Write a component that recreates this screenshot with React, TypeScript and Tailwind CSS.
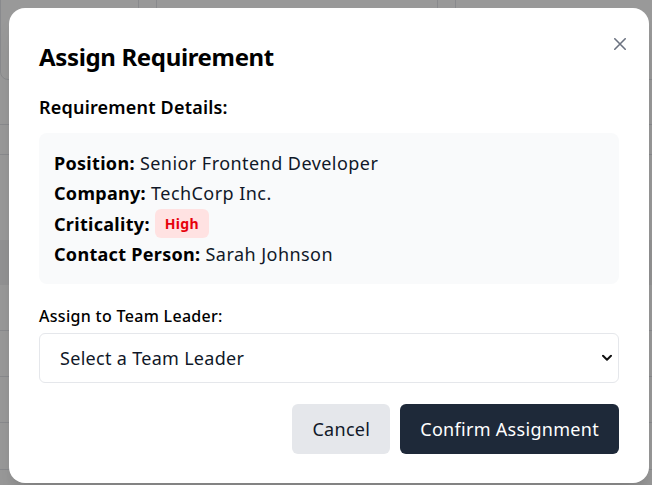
import { useState } from "react";

const teamLeaders = ["Michael Chen", "Priya Patel", "David Kim", "Emily Rodriguez"];

function BackgroundPage() {
  return (
    <div className="h-[485px] overflow-hidden bg-white">
      {/* stat cards peeking above the overlay */}
      <div className="-mt-10 flex gap-[17px]">
        <div className="h-[120px] w-[139px] shrink-0 rounded-lg border border-gray-200 bg-white" />
        <div className="h-[120px] w-[282px] shrink-0 rounded-lg border border-gray-200 bg-white" />
        <div className="h-[120px] w-[282px] shrink-0 rounded-lg border border-gray-200 bg-white" />
      </div>
      {/* table behind */}
      <div className="mt-[5px] flex flex-col">
        <div className="h-[40px] border-b border-gray-200" />
        <div className="h-[30px] border-b border-gray-200" />
        <div className="h-[85px]" />
        <div className="h-[45px] bg-gray-100" />
        <div className="h-[46px] border-b border-gray-200" />
        <div className="h-[46px] border-b border-gray-200" />
        <div className="h-[46px] border-b border-gray-200" />
        <div className="h-[47px] border-b border-gray-200" />
      </div>
    </div>
  );
}

function CloseIcon() {
  return (
    <svg width="12" height="12" viewBox="0 0 12 12" fill="none">
      <path d="M0.8 0.8L11.2 11.2M11.2 0.8L0.8 11.2" stroke="#6b7280" strokeWidth="1.6" strokeLinecap="round" />
    </svg>
  );
}

function Chevron() {
  return (
    <svg width="10" height="7" viewBox="0 0 10 7" fill="none">
      <path d="M1 1.2L5 5.2L9 1.2" stroke="#111" strokeWidth="2" strokeLinecap="round" strokeLinejoin="round" />
    </svg>
  );
}

export default function App() {
  const [leader, setLeader] = useState("");

  return (
    <div className="relative h-[485px] w-[652px] overflow-hidden font-['Noto_Sans',sans-serif]">
      <BackgroundPage />

      {/* overlay + modal */}
      <div className="absolute inset-0 bg-black/40">
        <div className="ml-[9px] mt-[8px] w-[640px] rounded-2xl bg-white px-[30px] pb-[29px] pt-[33px] tracking-[0.3px] shadow-xl">
          <div className="mb-5 flex items-start justify-between">
            <h2 className="text-2xl font-bold leading-8 tracking-[-0.35px] text-black">Assign Requirement</h2>
            <button className="-mr-[11px] -mt-[7px] p-1" aria-label="Close">
              <CloseIcon />
            </button>
          </div>

          <h3 className="mb-3 text-lg font-semibold leading-7 tracking-[0.2px] text-black">Requirement Details:</h3>

          <div className="space-y-0.5 rounded-lg bg-gray-50 px-[15px] py-4 text-lg leading-7 tracking-[0.45px] text-gray-900">
            <p>
              <span className="font-bold tracking-[0.3px] text-black">Position:</span> Senior Frontend Developer
            </p>
            <p>
              <span className="font-bold tracking-[0.3px] text-black">Company:</span> TechCorp Inc.
            </p>
            <p className="flex items-center gap-[5px]">
              <span className="font-bold tracking-[0.3px] text-black">Criticality:</span>
              <span className="inline-flex h-[29px] items-center rounded-md bg-red-100 px-[10px] text-sm font-bold tracking-[0.3px] text-red-600">
                High
              </span>
            </p>
            <p>
              <span className="font-bold tracking-[0.3px] text-black">Contact Person:</span> Sarah Johnson
            </p>
          </div>

          <label className="mt-5 mb-[5px] block text-base font-medium leading-6 text-black">
            Assign to Team Leader:
          </label>
          <div className="relative">
            <select
              value={leader}
              onChange={(e) => setLeader(e.target.value)}
              className="h-[50px] w-full appearance-none rounded-md border border-gray-200 bg-white pl-5 pr-10 text-lg tracking-[0.3px] text-gray-900 outline-none"
            >
              <option value="">Select a Team Leader</option>
              {teamLeaders.map((name) => (
                <option key={name} value={name}>
                  {name}
                </option>
              ))}
            </select>
            <span className="pointer-events-none absolute right-[7px] top-1/2 -translate-y-1/2">
              <Chevron />
            </span>
          </div>

          <div className="mt-[21px] flex justify-end gap-[10px]">
            <button className="h-[50px] rounded-md bg-gray-200 px-5 text-lg tracking-[0.3px] text-gray-900">Cancel</button>
            <button className="h-[50px] rounded-md bg-gray-800 px-5 text-lg tracking-[0.3px] text-white">
              Confirm Assignment
            </button>
          </div>
        </div>
      </div>
    </div>
  );
}
